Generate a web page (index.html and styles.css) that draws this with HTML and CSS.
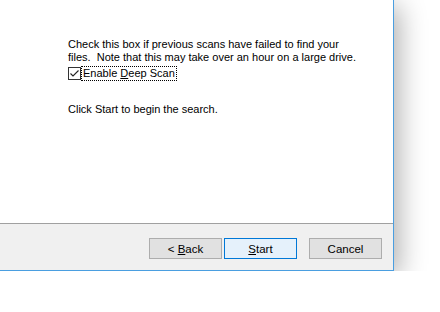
FILE: index.html
```html
<!DOCTYPE html>
<html lang="en">
<head>
    <meta charset="UTF-8">
    <title>Deep Scan</title>
    <link rel="stylesheet" href="styles.css">
</head>
<body>
    <div class="window">
        <div class="content">
            <p class="note">Check this box if previous scans have failed to find your<br>files.&nbsp; Note that this may take over an hour on a large drive.</p>
            <label class="check">
                <span class="box">
                    <svg width="11" height="11" viewBox="0 0 11 11"><path d="M1.5 5.5 L4 8 L9.5 2.5" fill="none" stroke="#222" stroke-width="1.1"/></svg>
                </span>
                <span class="focus">Enable <u>D</u>eep Scan</span>
            </label>
            <p class="hint">Click Start to begin the search.</p>
        </div>
        <div class="footer">
            <button class="btn">&lt; <u>B</u>ack</button>
            <button class="btn default"><u>S</u>tart</button>
            <button class="btn cancel">Cancel</button>
        </div>
    </div>
</body>
</html>
```

FILE: styles.css
```css
body {
    margin: 0;
    background: #fff;
    font-family: "Liberation Sans", Arial, sans-serif;
    font-size: 11px;
    color: #000;
    overflow: hidden;
}
.window {
    width: 393px;
    height: 270px;
    background: #fff;
    border-right: 1px solid #4a9ee0;
    border-bottom: 1px solid #4a9ee0;
    box-shadow: 5px 6px 26px rgba(0, 0, 0, 0.32);
    display: flex;
    flex-direction: column;
}
.content {
    height: 224px;
    padding: 38px 0 0 68px;
    box-sizing: border-box;
    border-bottom: 1px solid #a0a0a0;
}
.note {
    margin: 0;
    line-height: 13px;
}
.check {
    display: flex;
    align-items: center;
    margin-top: 3px;
    height: 13px;
}
.box {
    width: 11px;
    height: 11px;
    border: 1px solid #333;
    display: flex;
    margin-right: 1px;
}
.focus {
    outline: 1px dotted #000;
    line-height: 13px;
    padding: 0 1px;
}
.hint {
    margin: 23px 0 0;
    line-height: 13px;
}
.footer {
    flex: 1;
    background: #f0f0f0;
    display: flex;
    align-items: flex-start;
    padding: 14px 0 0 149px;
}
.btn {
    width: 73px;
    height: 21px;
    margin: 0;
    padding: 0;
    font: inherit;
    font-size: 11.5px;
    color: #000;
    background: #e1e1e1;
    border: 1px solid #adadad;
}
.default {
    margin-left: 2px;
    background: #e5f1fb;
    border-color: #0078d7;
}
.cancel {
    margin-left: 12px;
}
```
